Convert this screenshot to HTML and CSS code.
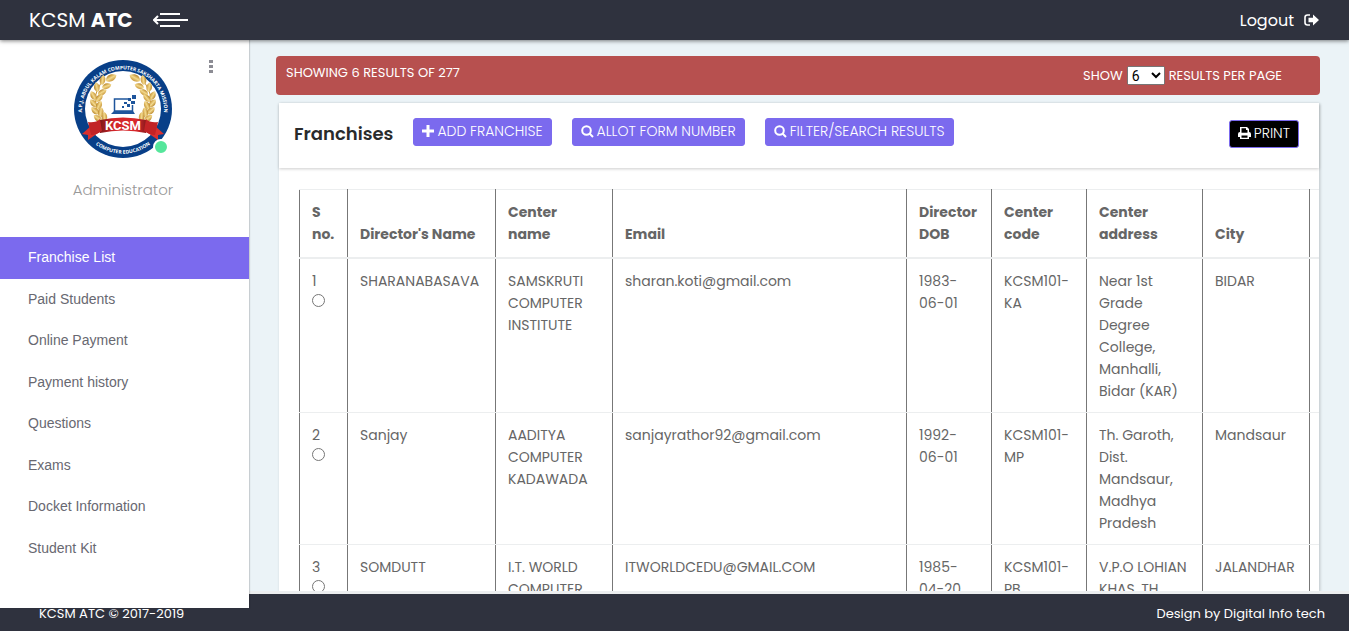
FILE: index.html
```html
<!DOCTYPE html>
<html lang="en">
<head>
    <meta charset="UTF-8">
    <meta name="viewport" content="width=device-width, initial-scale=1.0">
    <title>KCSM ATC</title>
    <link rel="stylesheet" href="styles.css">
</head>
<body>
    <header class="topbar">
        <a href="#" class="brand">KCSM <b>ATC</b></a>
        <button type="button" class="toggle" aria-label="Toggle menu">
            <svg width="36" height="14" viewBox="0 0 36 14" fill="none" stroke="#fff" stroke-width="2">
                <path d="M7 1h20M1 7h34M7 13h20"/>
                <path d="M5 3L1 7l4 4"/>
            </svg>
        </button>
        <a href="#" class="logout">Logout
            <svg width="15" height="12" viewBox="0 0 15 12">
                <path d="M6 1H3.500Q1 1 1 3.500v5Q1 11 3.500 11H6" fill="none" stroke="#fff" stroke-width="1.600"/>
                <path d="M4.500 3.800H9V.6L15 6l-6 5.400V8.200H4.500z" fill="#fff"/>
            </svg>
        </a>
    </header>

    <div class="main">
        <aside class="sidebar">
            <div class="profile">
                <div class="avatar">
                    <svg width="98" height="100" viewBox="0 0 98 100">
                        <defs>
                            <path id="leaf" d="M0 0C-4 -2 -4 -7 0 -10C4 -7 3 -2 0 0z" fill="url(#gold)"/>
                            <linearGradient id="gold">
                                <stop offset="0" stop-color="#b88427"/>
                                <stop offset=".5" stop-color="#f3d98c"/>
                                <stop offset="1" stop-color="#c9973a"/>
                            </linearGradient>
                            <linearGradient id="band">
                                <stop offset="0" stop-color="#7d1719"/>
                                <stop offset=".3" stop-color="#d3262a"/>
                                <stop offset=".8" stop-color="#d8282c"/>
                                <stop offset="1" stop-color="#8a1a1c"/>
                            </linearGradient>
                            <path id="ringTop" d="M10 64A41 41 0 1 1 88 64"/>
                            <path id="ringBottom" d="M14 78A45 45 0 0 0 84 78"/>
                            <g id="laurel">
                                <path d="M32 62Q11 42 31 19" fill="none" stroke="#c9973a"/>
                                <use href="#leaf" transform="translate(32 22) rotate(60) scale(1.200)"/>
                                <use href="#leaf" transform="translate(28 26) rotate(8)"/>
                                <use href="#leaf" transform="translate(28 29) rotate(70)"/>
                                <use href="#leaf" transform="translate(24 33) rotate(-12)"/>
                                <use href="#leaf" transform="translate(24 36) rotate(58)"/>
                                <use href="#leaf" transform="translate(22 41) rotate(-30)"/>
                                <use href="#leaf" transform="translate(22 43) rotate(40)"/>
                                <use href="#leaf" transform="translate(23 48) rotate(-42)"/>
                                <use href="#leaf" transform="translate(23 51) rotate(25)"/>
                                <use href="#leaf" transform="translate(25 55) rotate(-50)"/>
                                <use href="#leaf" transform="translate(26 58) rotate(10)"/>
                                <use href="#leaf" transform="translate(28 62) rotate(-55)"/>
                                <use href="#leaf" transform="translate(31 63) rotate(-5)"/>
                            </g>
                        </defs>
                        <circle cx="49" cy="50" r="49" fill="#083f88"/>
                        <circle cx="49" cy="50" r="38" fill="#fff"/>
                        <text class="ring-text"><textPath href="#ringTop" startOffset="50%">A.P.J. ABDUL KALAM COMPUTER SAKSHARTA MISSION</textPath></text>
                        <text class="ring-text"><textPath href="#ringBottom" startOffset="50%">COMPUTER EDUCATION</textPath></text>
                        <use href="#laurel"/>
                        <use href="#laurel" transform="translate(98 0) scale(-1 1)"/>
                        <path d="M54 40H40.500v12h18v-6" fill="none" stroke="#1e559c" stroke-width="1.500"/>
                        <path d="M40 52h19l2 3H37z" fill="#1e559c"/>
                        <path d="M58 36h4v4h-4zM54 39h3v3h-3zM57 42h4v3h-4zM50 43h3v2h-3zM53 45h3v3h-3zM48 47h2v2h-2z" fill="#1e559c"/>
                        <path d="M17 67L8 75l6 1 0 5 13-9zM81 67l9 8-6 1 0 5-13-9z" fill="#d9302e"/>
                        <path d="M26 61Q49 56 72 61v13Q49 69 26 74z" fill="url(#band)"/>
                        <path d="M14 63q8 1 12-3l2 12q-6 4-11 4zM84 63q-8 1-12-3l-2 12q6 4 11 4z" fill="#c22326"/>
                        <text class="ribbon-text" x="49" y="71">KCSM</text>
                    </svg>
                    <span class="status"></span>
                </div>
                <button type="button" class="dots" aria-label="More">
                    <svg width="4" height="13" viewBox="0 0 4 13" fill="#8c8c94">
                        <path d="M0 0h4v3H0zM0 5h4v3H0zM0 10h4v3H0z"/>
                    </svg>
                </button>
                <p class="role">Administrator</p>
            </div>
            <nav class="menu">
                <a href="#" class="active">Franchise List</a>
                <a href="#">Paid Students</a>
                <a href="#">Online Payment</a>
                <a href="#">Payment history</a>
                <a href="#">Questions</a>
                <a href="#">Exams</a>
                <a href="#">Docket Information</a>
                <a href="#">Student Kit</a>
            </nav>
        </aside>

        <main class="content">
            <div class="results">
                <span>SHOWING 6 RESULTS OF 277</span>
                <div class="per-page">
                    <label for="perPage">SHOW</label>
                    <select id="perPage">
                        <option>6</option>
                        <option>12</option>
                        <option>24</option>
                    </select>
                    <span>RESULTS PER PAGE</span>
                </div>
            </div>

            <section class="card">
                <div class="card-header">
                    <h1>Franchises</h1>
                    <button type="button" class="btn">
                        <svg width="12" height="12" viewBox="0 0 12 12"><path d="M4.500 0h3v4.500H12v3H7.500V12h-3V7.500H0v-3h4.500z"/></svg>
                        ADD FRANCHISE
                    </button>
                    <button type="button" class="btn">
                        <svg class="search" width="13" height="13" viewBox="0 0 13 13"><circle cx="5.500" cy="5.500" r="4.300"/><path d="M8.500 8.500l3.500 3.500"/></svg>
                        ALLOT FORM NUMBER
                    </button>
                    <button type="button" class="btn">
                        <svg class="search" width="13" height="13" viewBox="0 0 13 13"><circle cx="5.500" cy="5.500" r="4.300"/><path d="M8.500 8.500l3.500 3.500"/></svg>
                        FILTER/SEARCH RESULTS
                    </button>
                    <button type="button" class="btn print">
                        <svg width="13" height="12" viewBox="0 0 13 12"><path fill-rule="evenodd" d="M2 0h7l2 2v3q2 0 2 2v3h-2v2H2v-2H0V7q0-2 2-2zM3.500 1.300v4.500h6V3H8V1.300zM3.500 8.500v2.200h6V8.500z"/></svg>
                        PRINT
                    </button>
                </div>
                <div class="table-wrap">
                    <table>
                        <colgroup>
                            <col class="c-no">
                            <col class="c-director">
                            <col class="c-center">
                            <col class="c-email">
                            <col class="c-dob">
                            <col class="c-code">
                            <col class="c-address">
                            <col class="c-city">
                            <col class="c-more">
                        </colgroup>
                        <thead>
                            <tr>
                                <th>S no.</th>
                                <th>Director's Name</th>
                                <th>Center name</th>
                                <th>Email</th>
                                <th>Director DOB</th>
                                <th>Center code</th>
                                <th>Center address</th>
                                <th>City</th>
                                <th></th>
                            </tr>
                        </thead>
                        <tbody>
                            <tr>
                                <td><label for="f1">1</label><input type="radio" name="franchise" id="f1"></td>
                                <td>SHARANABASAVA</td>
                                <td>SAMSKRUTI COMPUTER INSTITUTE</td>
                                <td>sharan.koti@gmail.com</td>
                                <td>1983-06-01</td>
                                <td>KCSM101-KA</td>
                                <td>Near 1st<br>Grade<br>Degree College, Manhalli, Bidar (KAR)</td>
                                <td>BIDAR</td>
                                <td></td>
                            </tr>
                            <tr>
                                <td><label for="f2">2</label><input type="radio" name="franchise" id="f2"></td>
                                <td>Sanjay</td>
                                <td>AADITYA COMPUTER KADAWADA</td>
                                <td>sanjayrathor92@gmail.com</td>
                                <td>1992-06-01</td>
                                <td>KCSM101-MP</td>
                                <td>Th. Garoth,<br>Dist.<br>Mandsaur, Madhya Pradesh</td>
                                <td>Mandsaur</td>
                                <td></td>
                            </tr>
                            <tr>
                                <td><label for="f3">3</label><input type="radio" name="franchise" id="f3"></td>
                                <td>SOMDUTT</td>
                                <td>I.T. WORLD COMPUTER</td>
                                <td>ITWORLDCEDU@GMAIL.COM</td>
                                <td>1985-04-20</td>
                                <td>KCSM101-PB</td>
                                <td>V.P.O LOHIAN KHAS, TH</td>
                                <td>JALANDHAR</td>
                                <td></td>
                            </tr>
                        </tbody>
                    </table>
                </div>
            </section>
        </main>
    </div>

    <footer class="footer">
        <span>KCSM ATC © 2017-2019</span>
        <span>Design by Digital Info tech</span>
    </footer>
</body>
</html>
```

FILE: styles.css
```css
* {
    box-sizing: border-box;
}

body {
    display: flex;
    flex-direction: column;
    height: 100vh;
    margin: 0;
    padding-bottom: 7px;
    overflow: hidden;
    font-family: Poppins, Inter, sans-serif;
    font-size: 14px;
    color: #666;
    background-color: #fff;
}

a {
    color: inherit;
    text-decoration: none;
}

button {
    font-family: inherit;
    cursor: pointer;
}

/* top bar */
.topbar {
    position: relative;
    z-index: 3;
    display: flex;
    align-items: center;
    flex: none;
    height: 40px;
    padding: 0 30px 0 29px;
    color: #fff;
    background-color: #2f323e;
    box-shadow: 0 1px 4px rgba(0, 0, 0, 0.5);
}

.brand {
    font-size: 20px;
}

.toggle {
    display: flex;
    margin-left: 20px;
    padding: 0;
    border: none;
    background: none;
}

.logout {
    display: flex;
    align-items: center;
    gap: 10px;
    margin-left: auto;
    font-size: 16px;
}

.main {
    display: flex;
    flex: 1;
    min-height: 0;
}

/* sidebar hangs a little over the footer */
.sidebar {
    position: relative;
    z-index: 2;
    flex: none;
    width: 249px;
    margin-bottom: -17px;
    background-color: #fff;
    box-shadow: 1px 0 1px rgba(0, 0, 0, 0.15);
}

.profile {
    position: relative;
    height: 197px;
    padding: 19px 3px 0 0;
    text-align: center;
}

.avatar {
    position: relative;
    width: 98px;
    height: 100px;
    margin: 0 auto;
}

.ring-text {
    font-family: "Open Sans", sans-serif;
    font-size: 5px;
    font-weight: 700;
    fill: #fff;
    text-anchor: middle;
}

.ribbon-text {
    font-family: Roboto, sans-serif;
    font-size: 13px;
    font-weight: 700;
    fill: #fff;
    text-anchor: middle;
}

.status {
    position: absolute;
    right: 3px;
    bottom: 4px;
    width: 16px;
    height: 16px;
    border: 2px solid #fff;
    border-radius: 50%;
    background-color: #55e69b;
}

.dots {
    position: absolute;
    top: 20px;
    right: 36px;
    display: flex;
    padding: 0;
    border: none;
    background: none;
}

.role {
    margin: 20px 0 0;
    font-size: 15px;
    font-weight: 300;
    line-height: 22px;
    color: #999;
}

.menu {
    display: grid;
    grid-auto-rows: 1fr;
    height: 332px;
    font-family: "Liberation Sans", Arial, sans-serif;
    color: #686871;
}

.menu a {
    display: flex;
    align-items: center;
    padding: 0 28px 1px;
}

.menu .active {
    color: #fff;
    background-color: #7b6aee;
}

/* content */
.content {
    display: flex;
    flex-direction: column;
    flex: 1;
    min-width: 0;
    padding: 16px 29px 0 27px;
    background-color: #ebf3f7;
}

.results {
    display: flex;
    justify-content: space-between;
    flex: none;
    height: 39px;
    padding: 0 38px 0 10px;
    border-radius: 4px;
    font-size: 13px;
    line-height: 33px;
    color: #fff;
    background-color: #b7504f;
}

.per-page {
    display: flex;
    align-items: center;
    gap: 4px;
}

.per-page select {
    width: 38px;
    height: 19px;
    font-family: Roboto, sans-serif;
    font-size: 14px;
}

.card {
    display: flex;
    flex-direction: column;
    flex: 1;
    min-height: 0;
    margin: 8px 1px 0 3px;
    background-color: #fff;
    box-shadow: 1px 1px 3px rgba(0, 0, 0, 0.2);
}

.card-header {
    display: flex;
    align-items: flex-start;
    gap: 20px;
    flex: none;
    height: 65px;
    padding: 15px 20px 0 15px;
    box-shadow: 0 1px 3px rgba(0, 0, 0, 0.2);
}

h1 {
    margin: 0;
    font-size: 18px;
    font-weight: 600;
    line-height: 32px;
    color: #292b2c;
}

.btn {
    display: flex;
    align-items: center;
    gap: 3px;
    height: 28px;
    padding: 0 8px 2px;
    border: 1px solid #7b6aee;
    border-radius: 3px;
    font-size: 14px;
    font-weight: 300;
    color: #fff;
    background-color: #7b6aee;
}

.btn svg {
    fill: #fff;
}

.btn .search {
    fill: none;
    stroke: #fff;
    stroke-width: 2;
}

.print {
    margin: 2px 0 0 auto;
    background-color: #000;
}

.table-wrap {
    flex: 1;
    min-height: 0;
    margin-left: 20px;
    padding-top: 21px;
    overflow: hidden;
}

table {
    width: 1130px;
    table-layout: fixed;
    border-collapse: collapse;
}

.c-no { width: 48px; }
.c-director { width: 148px; }
.c-center { width: 117px; }
.c-email { width: 294px; }
.c-dob { width: 85px; }
.c-code { width: 95px; }
.c-address { width: 116px; }
.c-city { width: 107px; }
.c-more { width: 120px; }

th,
td {
    padding: 11px 12px 10px;
    border: 1px solid #777;
    border-top-color: #eceeef;
    border-bottom-color: #eceeef;
    line-height: 22px;
    text-align: left;
    vertical-align: top;
}

th {
    padding: 11px 12px 12px;
    border-bottom-width: 2px;
    vertical-align: bottom;
}

td label {
    display: block;
}

td input {
    display: block;
    margin: 2px 0 0;
}

/* footer */
.footer {
    display: flex;
    justify-content: space-between;
    flex: none;
    height: 40px;
    padding: 0 24px 0 39px;
    border-top: 3px solid #eceeef;
    font-size: 13px;
    line-height: 39px;
    color: #fff;
    background-color: #2f323e;
}
```
